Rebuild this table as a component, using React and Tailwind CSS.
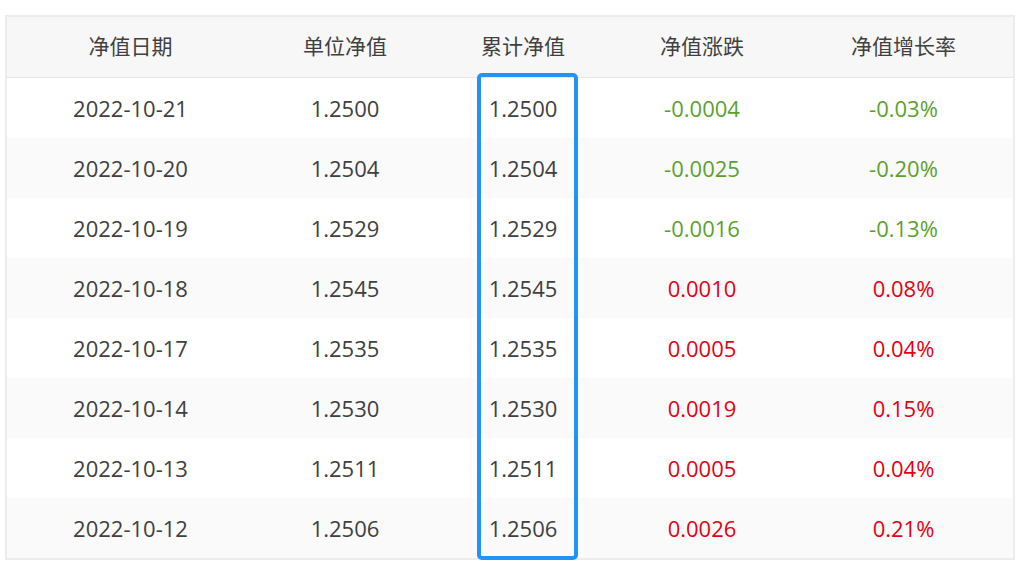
import React from 'react';

const rows = [
  ['2022-10-21', '1.2500', '1.2500', '-0.0004', '-0.03%'],
  ['2022-10-20', '1.2504', '1.2504', '-0.0025', '-0.20%'],
  ['2022-10-19', '1.2529', '1.2529', '-0.0016', '-0.13%'],
  ['2022-10-18', '1.2545', '1.2545', '0.0010', '0.08%'],
  ['2022-10-17', '1.2535', '1.2535', '0.0005', '0.04%'],
  ['2022-10-14', '1.2530', '1.2530', '0.0019', '0.15%'],
  ['2022-10-13', '1.2511', '1.2511', '0.0005', '0.04%'],
  ['2022-10-12', '1.2506', '1.2506', '0.0026', '0.21%'],
];

const headers = ['净值日期', '单位净值', '累计净值', '净值涨跌', '净值增长率'];

// column widths measured from the screenshot
const widths = ['w-[247px]', 'w-[182px]', 'w-[174px]', 'w-[184px]', 'w-[219px]'];

export default function App() {
  return (
    <div
      className="min-h-[570px] bg-white pt-[15px] pl-[5px]"
      style={{ fontFamily: '"Open Sans", "Noto Sans CJK SC", sans-serif' }}
    >
      <div className="relative w-[1010px] border-2 border-[#ececec]">
        {/* 表头 */}
        <div className="flex h-[61px] bg-[#f7f7f7] border-b border-[#e6e6e6] text-[21px] text-[#404040]">
          {headers.map((h, i) => (
            <div key={h} className={`${widths[i]} flex items-center justify-center`}>
              {h}
            </div>
          ))}
        </div>

        {/* 数据行 */}
        {rows.map((r, idx) => {
          const up = !r[3].startsWith('-');
          const color = up ? 'text-[#e60012]' : 'text-[#5ba12d]';
          return (
            <div
              key={r[0]}
              className={`flex h-[60px] text-[22px] ${idx % 2 === 1 ? 'bg-[#fafafa]' : 'bg-white'}`}
            >
              <div className={`${widths[0]} flex items-center justify-center text-[#404040]`}>{r[0]}</div>
              <div className={`${widths[1]} flex items-center justify-center text-[#404040]`}>{r[1]}</div>
              <div className={`${widths[2]} flex items-center justify-center text-[#404040]`}>{r[2]}</div>
              <div className={`${widths[3]} flex items-center justify-center ${color}`}>{r[3]}</div>
              <div className={`${widths[4]} flex items-center justify-center ${color}`}>{r[4]}</div>
            </div>
          );
        })}

        {/* 高亮框 */}
        <div className="absolute left-[470px] top-[56px] w-[101px] h-[487px] border-[4px] border-[#2393f5] rounded-[5px] pointer-events-none" />
      </div>
    </div>
  );
}
